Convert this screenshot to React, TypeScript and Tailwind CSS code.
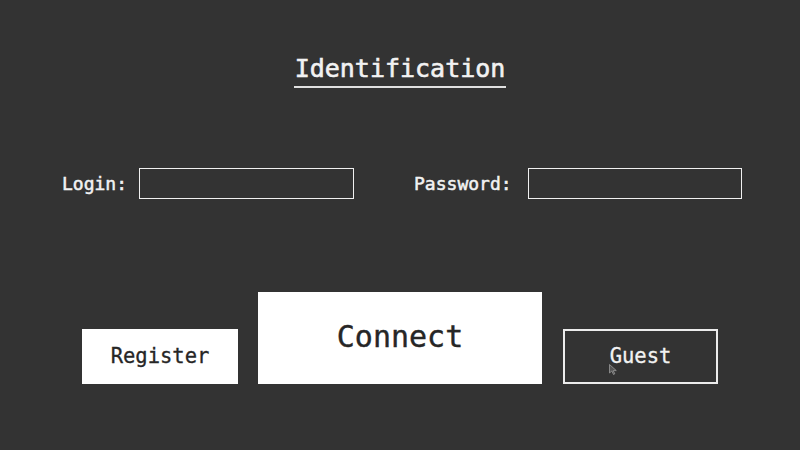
export default function App() {
  return (
    <div className="relative w-[800px] h-[450px] bg-[#333333] flex flex-col font-['DejaVu_Sans_Mono',monospace] overflow-hidden">
      <div className="mt-[54px] flex justify-center">
        <span className="text-[25px] leading-[30px] text-[#f2f2f2] [-webkit-text-stroke:0.6px_#f2f2f2] border-b-2 border-[#e0e0e0] pb-[2px] px-[1px]">
          Identification
        </span>
      </div>

      <div className="mt-[80px] flex items-center pl-[62px]">
        <label className="text-[18px] text-[#f2f2f2] [-webkit-text-stroke:0.5px_#f2f2f2]">Login:</label>
        <input className="ml-[12px] w-[215px] h-[31px] border border-[#f0f0f0] bg-transparent outline-none" />
        <label className="ml-[60px] text-[18px] text-[#f2f2f2] [-webkit-text-stroke:0.5px_#f2f2f2]">Password:</label>
        <input
          type="password"
          className="ml-[16px] w-[214px] h-[31px] border border-[#f0f0f0] bg-transparent outline-none"
        />
      </div>

      <div className="mt-[93px] flex items-end pl-[82px]">
        <button className="w-[156px] h-[55px] bg-white text-[#262626] text-[20.5px] [-webkit-text-stroke:0.3px_#262626] flex items-center justify-center">
          Register
        </button>
        <button className="ml-[20px] w-[284px] h-[92px] bg-white text-[#262626] text-[30px] [-webkit-text-stroke:0.4px_#262626] flex items-center justify-center pb-[3px]">
          Connect
        </button>
        <button className="ml-[21px] w-[155px] h-[55px] border-2 border-[#ececec] text-[#f2f2f2] text-[20.5px] [-webkit-text-stroke:0.3px_#f2f2f2] flex items-center justify-center">
          Guest
        </button>
      </div>

      <svg className="absolute left-[609px] top-[364px]" width="8" height="11" viewBox="0 0 8 11">
        <path d="M0.5 0.5 L0.5 9 L2.8 7 L4.5 10.5 L5.8 9.8 L4.2 6.6 L7.3 6.6 Z" fill="#555" stroke="#999" strokeWidth="0.8" />
      </svg>
    </div>
  );
}
